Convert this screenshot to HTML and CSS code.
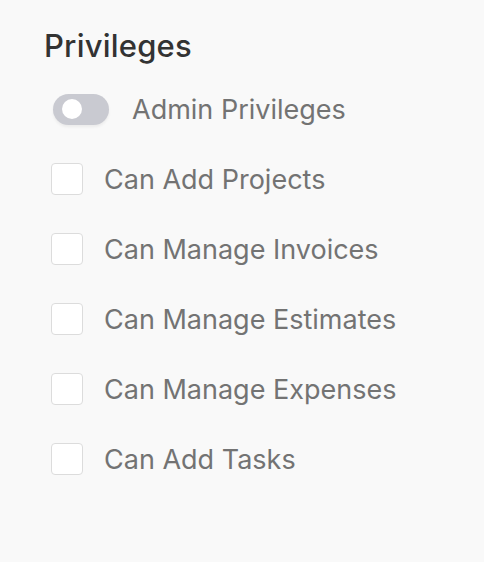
FILE: index.html
```html
<!DOCTYPE html>
<html>
<head>
  <title>Privileges</title>
  <link rel="stylesheet" href="styles.css">
</head>
<body>
  <div class="privileges">
    <h2 class="title">Privileges</h2>

    <label class="row toggle-row">
      <span class="toggle"><span class="knob"></span></span>
      <span class="label">Admin Privileges</span>
    </label>

    <label class="row">
      <span class="check"></span>
      <span class="label">Can Add Projects</span>
    </label>
    <label class="row">
      <span class="check"></span>
      <span class="label">Can Manage Invoices</span>
    </label>
    <label class="row">
      <span class="check"></span>
      <span class="label">Can Manage Estimates</span>
    </label>
    <label class="row">
      <span class="check"></span>
      <span class="label">Can Manage Expenses</span>
    </label>
    <label class="row">
      <span class="check"></span>
      <span class="label">Can Add Tasks</span>
    </label>
  </div>
</body>
</html>
```

FILE: styles.css
```css
body {
  margin: 0;
  background: #f9f9f9;
  font-family: "Inter", "Noto Sans", sans-serif;
  height: 100vh;
}

.privileges {
  padding: 27px 0 0 51px;
  display: flex;
  flex-direction: column;
}

.title {
  margin: 0 0 0 -7px;
  font-size: 31px;
  font-weight: 500;
  letter-spacing: 0.2px;
  color: #333;
  line-height: 38px;
}

.row {
  display: flex;
  align-items: center;
  height: 70px;
  gap: 21px;
}

.toggle-row {
  margin-top: 9px;
  padding-left: 2px;
  gap: 23px;
}

.toggle {
  width: 56px;
  height: 31px;
  border-radius: 16px;
  background: #c9cad1;
  display: flex;
  align-items: center;
  padding-left: 9px;
  box-sizing: border-box;
  box-shadow: 0 2px 3px rgba(0, 0, 0, 0.06);
}

.knob {
  width: 20px;
  height: 20px;
  border-radius: 50%;
  background: #fff;
}

.check {
  width: 30px;
  height: 30px;
  border: 1px solid #dcdcdc;
  border-radius: 4px;
  background: #fff;
}

.label {
  font-size: 27px;
  color: #737373;
}
```
